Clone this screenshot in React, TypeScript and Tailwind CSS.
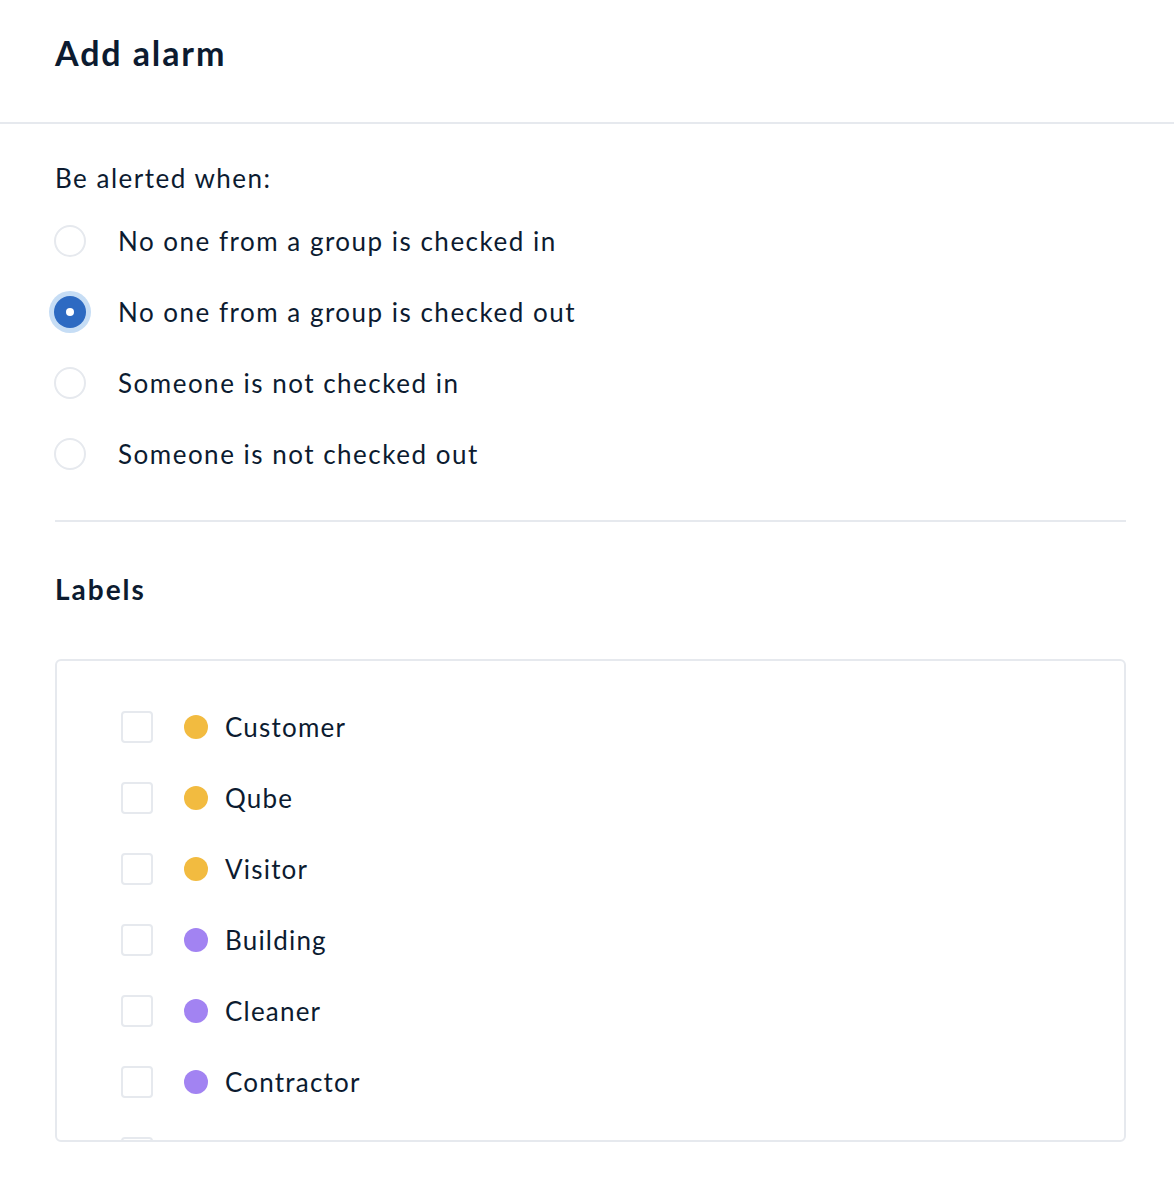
import React from "react";

const options = [
  "No one from a group is checked in",
  "No one from a group is checked out",
  "Someone is not checked in",
  "Someone is not checked out",
];

const labels = [
  { name: "Customer", color: "#f2bb40" },
  { name: "Qube", color: "#f2bb40" },
  { name: "Visitor", color: "#f2bb40" },
  { name: "Building", color: "#a283f2" },
  { name: "Cleaner", color: "#a283f2" },
  { name: "Contractor", color: "#a283f2" },
  { name: "Delivery", color: "#a283f2" },
];

function Radio({ checked }: { checked: boolean }) {
  if (checked) {
    return (
      <span className="flex h-[42px] w-[42px] items-center justify-center rounded-full bg-[#c6ddf5]">
        <span className="flex h-[32px] w-[32px] items-center justify-center rounded-full bg-[#2d6ac2]">
          <span className="h-[8px] w-[8px] rounded-full bg-white" />
        </span>
      </span>
    );
  }
  return (
    <span className="flex h-[42px] w-[42px] items-center justify-center">
      <span className="h-[32px] w-[32px] rounded-full border-2 border-[#e6e9ee] bg-white" />
    </span>
  );
}

export default function App() {
  const selected = 1;
  return (
    <div className="min-h-[1178px] bg-white text-[#0c1b30] font-['Lato','Liberation_Sans',sans-serif]">
      <div className="flex h-[124px] items-start px-[55px] pt-[30px] border-b-2 border-[#e6e9ee]">
        <h1 className="text-[34px] leading-[46px] font-bold tracking-[1.9px]">Add alarm</h1>
      </div>

      <div className="pl-[55px] pr-[48px] pt-[38px]">
        <p className="text-[26px] leading-[32px] tracking-[1.5px]">Be alerted when:</p>
        <div className="mt-[26px] flex flex-col gap-[29px]">
          {options.map((o, i) => (
            <label key={o} className="flex h-[42px] items-center">
              <span className="-ml-[6px] mr-[27px]">
                <Radio checked={i === selected} />
              </span>
              <span className="text-[26px] leading-[32px] tracking-[1.5px]">{o}</span>
            </label>
          ))}
        </div>

        <div className="mt-[45px] h-[2px] bg-[#e6e9ee]" />

        <h2 className="mt-[49px] text-[28px] leading-[36px] font-bold tracking-[2px]">Labels</h2>

        <div className="mt-[52px] h-[483px] overflow-y-auto rounded-[6px] border-2 border-[#e6e9ee] [scrollbar-width:none]">
          <div className="flex flex-col gap-[39px] pl-[64px] pt-[50px] pb-[40px]">
            {labels.map((l) => (
              <div key={l.name} className="flex h-[32px] items-center">
                <span className="h-[32px] w-[32px] rounded-[4px] border-2 border-[#e6e9ee] bg-white" />
                <span
                  className="ml-[31px] h-[24px] w-[24px] rounded-full"
                  style={{ backgroundColor: l.color }}
                />
                <span className="ml-[17px] text-[26px] leading-[32px] tracking-[1.2px]">{l.name}</span>
              </div>
            ))}
          </div>
        </div>
      </div>
    </div>
  );
}
